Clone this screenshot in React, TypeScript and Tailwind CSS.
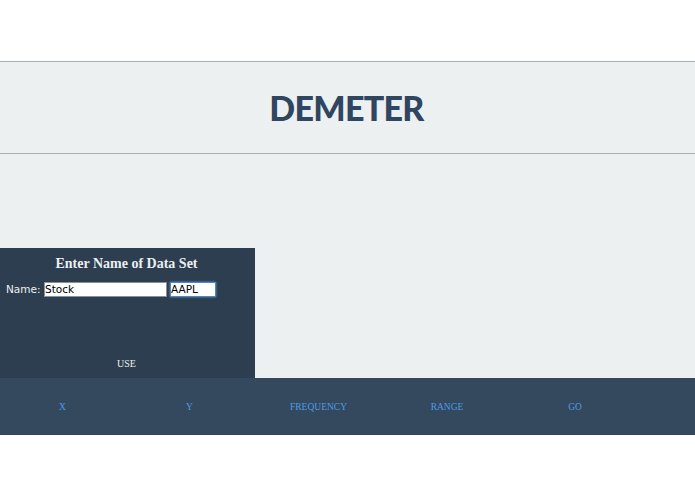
const navItems = ['X', 'Y', 'FREQUENCY', 'RANGE', 'GO'];

export default function App() {
  return (
    <div className="flex h-[494px] w-[695px] flex-col overflow-hidden bg-white font-['Liberation_Serif',serif]">
      <div className="h-[61px]" />

      {/* Header */}
      <header className="flex h-[93px] items-center justify-center border-y border-[#a9afb1] bg-[#ecf0f1] pr-[2px]">
        <h1 className="font-['Lato',sans-serif] text-[34px] leading-none font-black tracking-[-0.7px] text-[#2f4560]">
          DEMETER
        </h1>
      </header>

      {/* Main area */}
      <main className="flex h-[224px] items-end bg-[#ecf0f1]">
        <section className="flex h-[130px] w-[255px] flex-col bg-[#2c3e50] text-white">
          <h2 className="mt-[6px] pr-[2px] text-center text-[14px] leading-[19px] font-bold text-[#ecf0f1]">
            Enter Name of Data Set
          </h2>
          <div className="mt-[9px] flex items-center pl-[6px] font-['DejaVu_Sans',sans-serif] text-[10.5px]">
            <label className="w-[38px] text-[#ecf0f1]">Name:</label>
            <input
              readOnly
              value="Stock"
              className="h-[15px] w-[123px] border border-[#8a8f94] bg-white text-[10.5px] text-black outline-none"
            />
            <input
              readOnly
              value="AAPL"
              className="ml-[4px] h-[13px] w-[44px] bg-white text-[10.5px] text-black shadow-[0_0_0_1px_#4d86c0,0_0_2px_1px_#6fa3d8] outline-none"
            />
          </div>
          <button className="mt-auto mb-[8px] pr-[2px] text-center text-[10px] leading-[12px] text-[#ecf0f1]">USE</button>
        </section>
      </main>

      {/* Bottom nav */}
      <nav className="grid h-[57px] grid-cols-[125px_129px_129px_128px_128px] items-center bg-[#34495e] pt-px text-center text-[9.5px] text-[#4b9be6]">
        {navItems.map((item) => (
          <a key={item} className="leading-3">
            {item}
          </a>
        ))}
      </nav>
    </div>
  );
}
